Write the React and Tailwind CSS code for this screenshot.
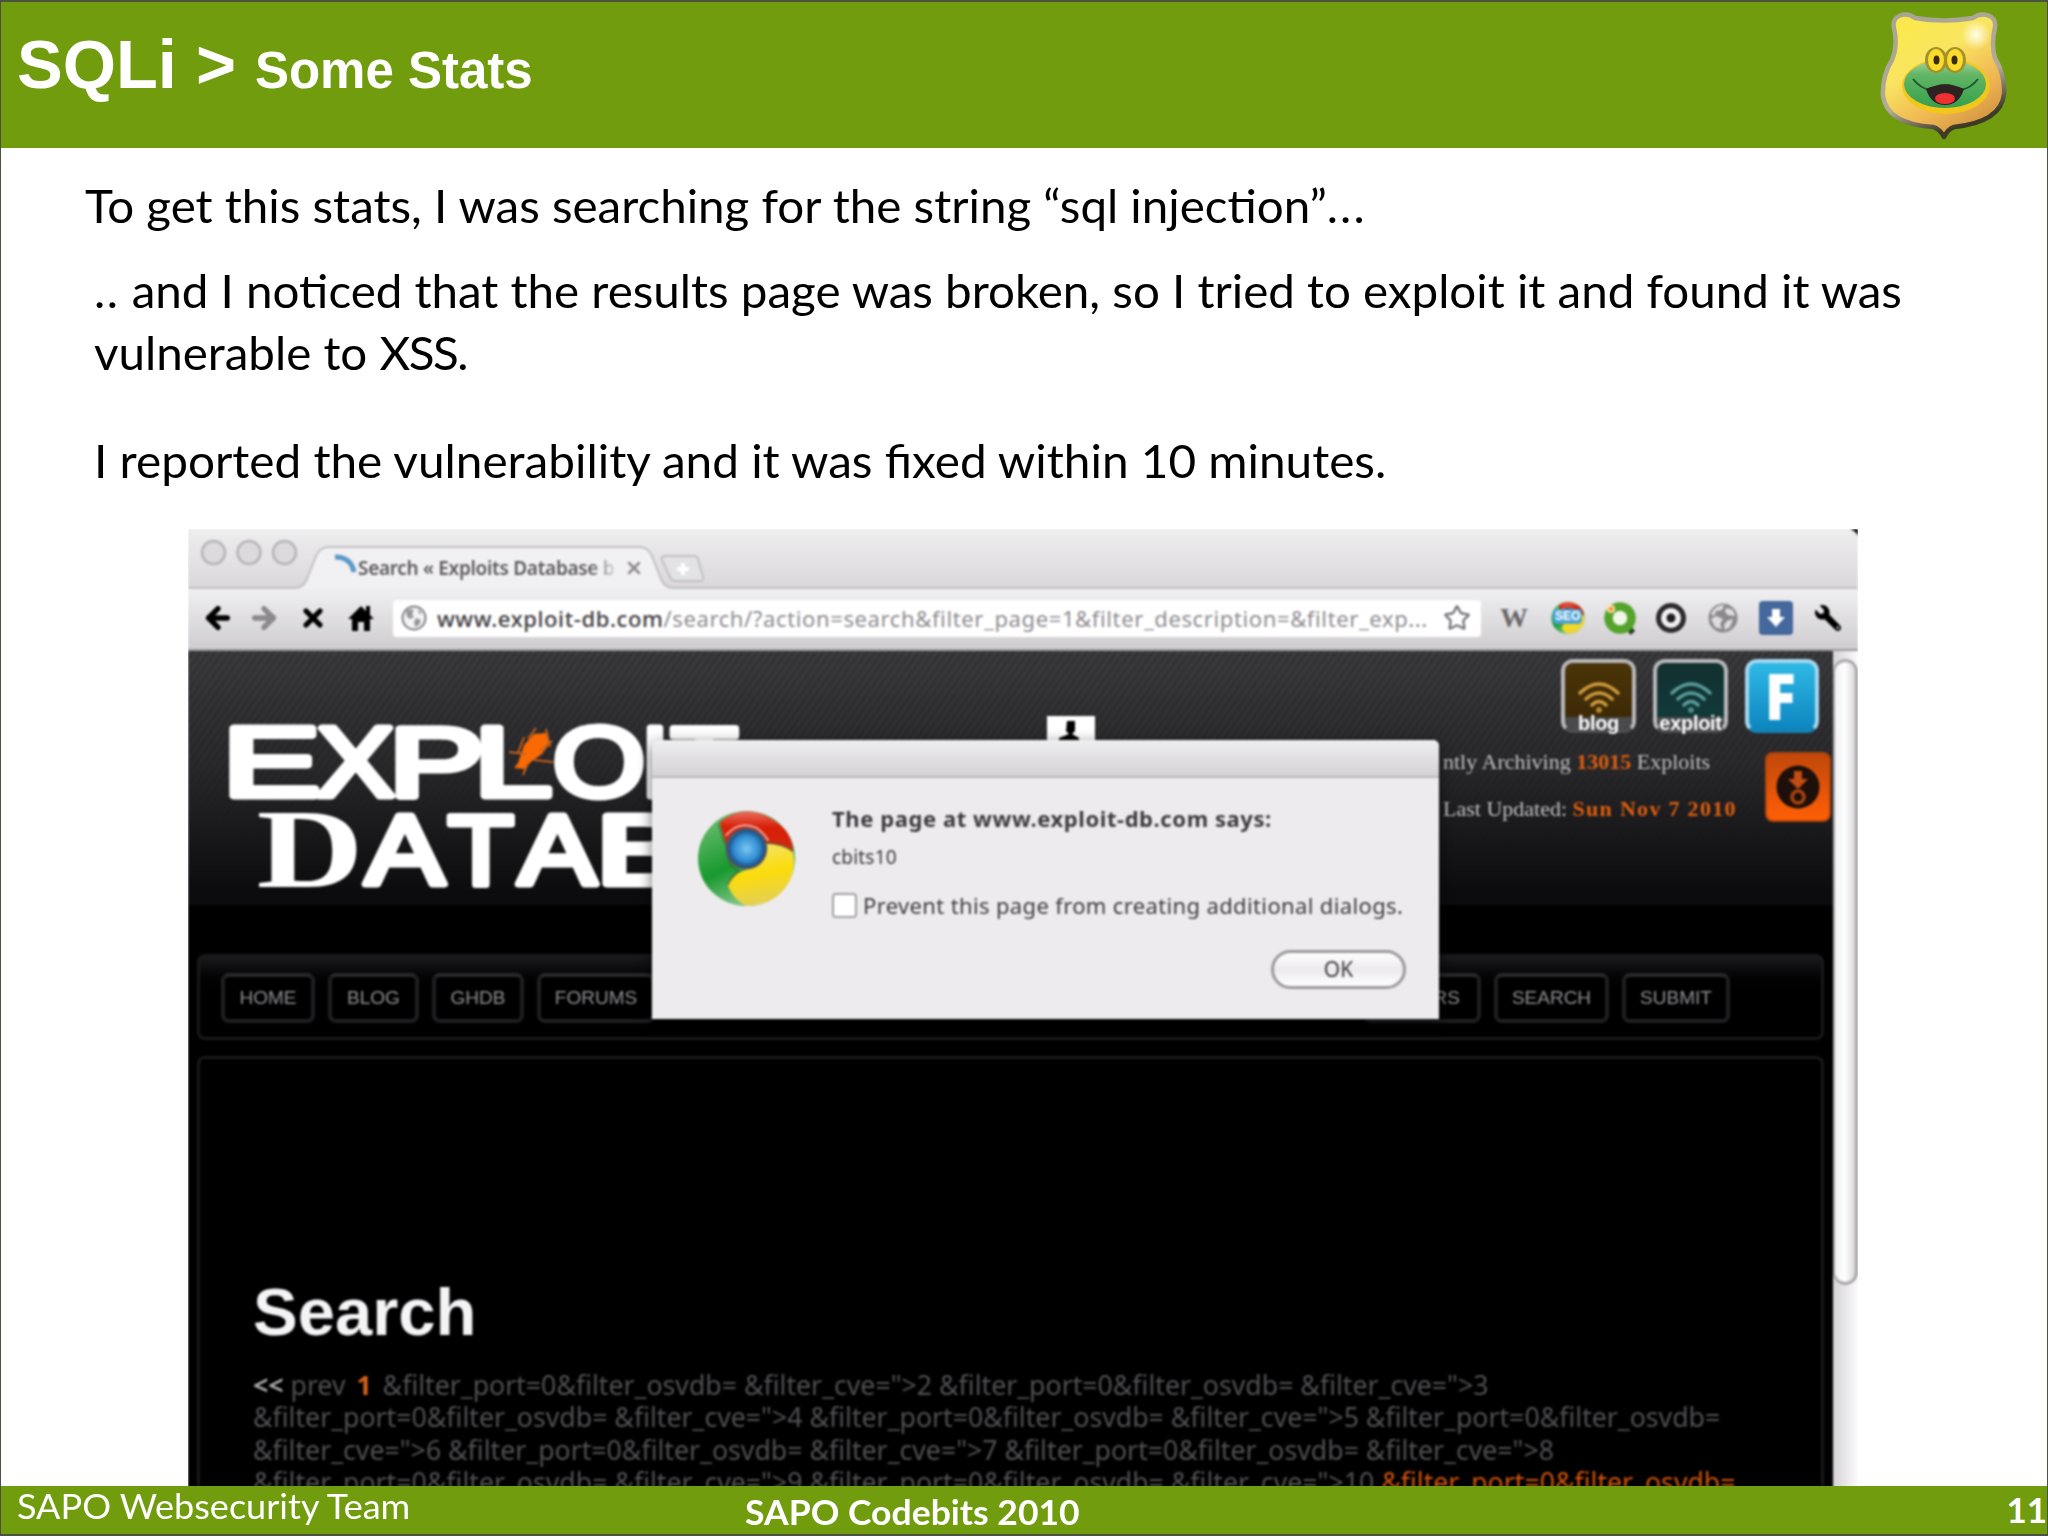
import React from 'react';
import { clsx } from 'clsx';
import { ArrowLeft, ArrowRight, Star, X } from 'lucide-react';
import { FaWrench } from 'react-icons/fa';

const Frog = () => (
    <svg viewBox="40 10 128 132" className="h-[132px] w-32 blur-[0.700px]">
        <defs>
            <linearGradient id="shield" x1="0.2" y1="0" x2="0.8" y2="1">
                <stop offset="0" stopColor="#fbe94a" />
                <stop offset="0.35" stopColor="#f9e560" />
                <stop offset="0.7" stopColor="#efb552" />
                <stop offset="1" stopColor="#c98b3e" />
            </linearGradient>
            <linearGradient id="rim" x1="0" y1="0" x2="0.4" y2="1">
                <stop offset="0" stopColor="#a9a493" />
                <stop offset="0.7" stopColor="#b3aa98" />
                <stop offset="1" stopColor="#3d3a26" />
            </linearGradient>
            <radialGradient id="glow">
                <stop offset="0" stopColor="#fffde8" />
                <stop offset="1" stopColor="#fffde8" stopOpacity="0" />
            </radialGradient>
            <linearGradient id="skin" x1="0" y1="0" x2="0" y2="1">
                <stop offset="0" stopColor="#a8d5a0" />
                <stop offset="0.3" stopColor="#63b665" />
                <stop offset="1" stopColor="#35a04c" />
            </linearGradient>
        </defs>
        <path
            d="M54 28C51 15 66 11 75 18Q104 23 133 18C142 11 157 15 155 27Q151 45 155 58C162 70 165 80 164 94C162 114 142 124 114 127Q108 129 104 137Q100 129 93 127C64 125 46 116 43 96Q42 76 52 60Q58 46 54 28Z"
            fill="url(#shield)"
            stroke="url(#rim)"
            strokeWidth="4.500"
            strokeLinejoin="round"
        />
        <circle cx="136" cy="35" r="15" fill="url(#glow)" />
        <ellipse cx="106" cy="86" rx="44" ry="28" fill="#f2c71c" />
        <ellipse cx="105" cy="84" rx="41" ry="24" fill="url(#skin)" />
        <ellipse cx="96" cy="60" rx="11" ry="13" fill="#a3922c" />
        <ellipse cx="115" cy="60" rx="11" ry="13" fill="#a3922c" />
        <ellipse cx="96" cy="60" rx="8" ry="11" fill="#fbdb2c" />
        <ellipse cx="115" cy="60" rx="8" ry="11" fill="#fbdb2c" />
        <ellipse cx="96.5" cy="60" rx="3" ry="4.5" fill="#3b2c08" />
        <ellipse cx="114.500" cy="60" rx="3" ry="4.500" fill="#3b2c08" />
        <path d="M73 79Q80 88 90 90Q105 80 121 90Q131 88 138 79" fill="none" stroke="#23572d" strokeWidth="2" />
        <path d="M86 89Q105 80 124 89Q119 105 105 105Q91 105 86 89Z" fill="#2c2222" />
        <ellipse cx="105" cy="98.500" rx="10" ry="5.500" fill="#ee3030" />
    </svg>
);

const Chrome = ({ className }) => (
    <svg viewBox="0 0 100 98" className={className}>
        <defs>
            <linearGradient id="green" x1="0" y1="0" x2="0.5" y2="1">
                <stop offset="0" stopColor="#7cc47d" />
                <stop offset="0.6" stopColor="#18992f" />
                <stop offset="1" stopColor="#8fcb93" />
            </linearGradient>
            <linearGradient id="red" x1="0" y1="0" x2="0" y2="1">
                <stop offset="0" stopColor="#e8705f" />
                <stop offset="0.4" stopColor="#d81e06" />
                <stop offset="1" stopColor="#d62a12" />
            </linearGradient>
            <linearGradient id="yellow" x1="0.3" y1="0" x2="0.5" y2="1">
                <stop offset="0" stopColor="#f6e36a" />
                <stop offset="0.5" stopColor="#fbdc0c" />
                <stop offset="1" stopColor="#e3cf5a" />
            </linearGradient>
            <radialGradient id="blue">
                <stop offset="0" stopColor="#79c6f3" />
                <stop offset="0.7" stopColor="#2f8bd0" />
                <stop offset="1" stopColor="#1b4f86" />
            </radialGradient>
        </defs>
        <ellipse cx="50" cy="49" rx="49" ry="48" fill="url(#green)" />
        <path d="M23 12Q48 -8 76 9Q97 22 97 42Q84 34 68 34Q60 18 44 20Q32 22 30 36Z" fill="url(#red)" />
        <path d="M68 34Q88 34 97 42Q102 70 80 88Q68 97 50 97Q36 90 31 76Q34 66 50 60Q66 56 68 34Z" fill="url(#yellow)" />
        <path d="M22 14Q26 28 30 38Q30 56 42 62Q34 68 31 76M68 33Q86 33 97 42" fill="none" stroke="#4b5a38" strokeWidth="2" opacity="0.6" />
        <path d="M29 26Q42 10 60 18Q68 24 72 31" fill="none" stroke="#f0a79b" strokeWidth="2" />
        <circle cx="50" cy="39" r="21" fill="#4d5668" />
        <circle cx="50" cy="39" r="18.500" fill="url(#blue)" />
    </svg>
);

const Globe = ({ className }) => (
    <svg viewBox="0 0 26 26" className={className}>
        <circle cx="13" cy="13" r="11.500" fill="#f4f4f4" stroke="#858387" strokeWidth="2" />
        <path d="M5 6Q10 3 13 5L11 9L13 12L9 14L6 12ZM15 13L20 15L18 20L14 22L13 17ZM17 4L21 8L18 9Z" fill="#98969a" />
    </svg>
);

const Extensions = () => (
    <div className="flex items-center text-black">
        <span className="ml-[19px] w-[30px] font-['Liberation_Serif',serif] text-[28px] font-bold leading-none text-[#6a686c]">W</span>
        <div className="relative ml-[21px] h-[34px] w-[34px]">
            <Chrome className="h-full w-full" />
            <span className="absolute left-0.5 top-2 rounded bg-[#4da3d6] px-0.5 font-['Liberation_Sans',sans-serif] text-[12px] font-bold leading-[15px] text-white">SEO</span>
        </div>
        <svg viewBox="0 0 36 36" className="ml-[17px] h-9 w-9">
            <path d="M24 25L31 33" stroke="#26401c" strokeWidth="6" />
            <circle cx="18" cy="18" r="11.500" fill="#f0f6e8" stroke="#55a32b" strokeWidth="8.500" />
            <circle cx="9" cy="9" r="4" fill="#ffe2a0" />
            <circle cx="9" cy="9" r="2" fill="#f27f32" />
        </svg>
        <svg viewBox="0 0 32 32" className="ml-[17px] h-8 w-8">
            <circle cx="16" cy="16" r="12.500" fill="#f1f0f2" stroke="#2b292c" strokeWidth="5" />
            <circle cx="16" cy="16" r="4.500" fill="#1f1d20" />
        </svg>
        <svg viewBox="0 0 32 32" className="ml-5 h-8 w-8">
            <circle cx="16" cy="16" r="14.500" fill="#8c8a8e" />
            <path d="M4 12Q8 3 17 3L15 8L9 9L7 14ZM19 6L26 8L28 14L21 13L18 10ZM4 17L9 14L16 17L13 22L15 27L8 25ZM20 19L26 17L23 25L18 28L17 23Z" fill="#dddcdf" />
        </svg>
        <svg viewBox="0 0 34 34" className="ml-5 h-[34px] w-[34px]">
            <rect width="34" height="34" rx="4" fill="#44679c" />
            <path d="M13 8H21V16H26L17 26L8 16H13Z" fill="#fff" />
        </svg>
        <FaWrench className="ml-[22px] h-[26px] w-[26px] -scale-x-100" />
    </div>
);

const TabStrip = () => (
    <div className="relative flex h-[60px] bg-linear-to-b from-[#efeeef] to-[#d9d7da]">
        <svg viewBox="0 0 1670 60" className="absolute inset-0 h-full w-full">
            <path d="M0 60V59H106Q115 59 119 50L128 27Q132 18 141 18H452Q460 18 464 27L473 50Q477 59 486 59H1670V60Z" fill="#f1f0f2" />
            <path d="M0 59H106Q115 59 119 50L128 27Q132 18 141 18H452Q460 18 464 27L473 50Q477 59 486 59H1670" fill="none" stroke="#c2c0c3" strokeWidth="2" />
            <path d="M476 27H506Q509 27 510 30L515 48Q516 52 512 52H488Q484 52 482 48L474 31Q473 27 476 27Z" fill="#e3e2e4" stroke="#c2c0c3" strokeWidth="2" />
            <path d="M495 34V46M489 40H501" stroke="#fff" strokeWidth="4" />
            <path d="M147 28Q163 28 166 43" fill="none" stroke="#5b9ac9" strokeWidth="5" />
            {[25.500, 61, 96.500].map((cx) => (
                <circle key={cx} cx={cx} cy="23.500" r="11.500" fill="#dcdadd" stroke="#b6b4b7" strokeWidth="2.500" />
            ))}
            <path d="M1662 0H1670V7Q1668 2 1662 0Z" fill="#000" />
        </svg>
        <div className="relative ml-[170px] mt-[23px] flex h-8 items-center font-['Noto_Sans',sans-serif] text-[19px] font-semibold tracking-[-0.300px] text-[#5c5a5e]">
            <span className="w-[262px] overflow-hidden whitespace-nowrap mask-r-from-88%">Search « Exploits Database b</span>
            <X className="ml-1 h-5 w-5 text-[#8c8a8e]" strokeWidth={3} />
        </div>
    </div>
);

const Toolbar = () => (
    <div className="flex h-[62px] items-center border-b-2 border-[#9b999c] bg-linear-to-b from-[#f0eff1] to-[#cfcdd0] pb-0.5 text-black">
        <ArrowLeft className="ml-[14px] h-8 w-8" strokeWidth={4} />
        <ArrowRight className="ml-[14px] h-8 w-8 text-[#8b898c]" strokeWidth={4} />
        <X className="ml-[19px] h-7 w-7" strokeWidth={4.500} />
        <svg viewBox="0 0 26 26" className="ml-[21px] h-[26px] w-[26px]">
            <path d="M13 1L0 14H4V26H10V17H16V26H22V14H26L22 10V1H18V6Z" fill="#000" />
        </svg>
        <div className="ml-[19px] flex h-[37px] w-[1088px] items-center rounded-sm bg-white">
            <Globe className="ml-2 h-[26px] w-[26px]" />
            <span className="ml-2.5 w-[994px] whitespace-nowrap font-['Noto_Sans',sans-serif] text-[22px] leading-[34px] tracking-[0.620px] text-[#8f8d91]">
                <span className="font-medium text-[#3f3d41]">www.exploit-db.com</span>
                /search/?action=search&amp;filter_page=1&amp;filter_description=&amp;filter_exp...
            </span>
            <Star className="ml-3 h-7 w-7 text-[#77757a]" strokeWidth={2} />
        </div>
        <Extensions />
    </div>
);

// [letter, x, width] of every glyph in the two logo rows
const exploit = [
    ['E', -5.500, 98],
    ['X', 89, 77],
    ['P', 160.800, 95.300],
    ['L', 246, 78.200],
    ['O', 324.800, 92.400],
    ['I', 413, 28],
    ['T', 443, 66.800],
];
const database = [
    ['A', 137.500, 78.600],
    ['T', 220, 65.700],
    ['A', 290.500, 77.600],
    ['B', 367.500, 98],
];

const Logo = () => (
    <svg viewBox="0 0 530 180" className="h-[180px] w-[530px] overflow-visible fill-white font-['Liberation_Sans',sans-serif] text-[99px]">
        <g stroke="#fff" strokeWidth="7" strokeLinejoin="round">
            {exploit.map(([letter, x, width]) => (
                <text key={x} x={x} y="83" textLength={width} lengthAdjust="spacingAndGlyphs">{letter}</text>
            ))}
            {database.map(([letter, x, width]) => (
                <text key={x} x={x} y="170.500" textLength={width} lengthAdjust="spacingAndGlyphs">{letter}</text>
            ))}
        </g>
        <text x="28.500" y="174" textLength="107" lengthAdjust="spacingAndGlyphs" className="font-['Liberation_Serif',serif] text-[113px] font-bold">D</text>
        <path d="M290 50L296 32L306 21L318 20L322 30L314 41L304 48L296 56L286 55Z" fill="#f96a05" />
        <path d="M281 39L298 41M306 47L325 49M295 62L300 50M300 26L308 15M290 40L296 24M324 28L312 38M318 16L322 34" stroke="#c8611a" strokeWidth="2" />
    </svg>
);

const Wifi = ({ stroke }) => (
    <svg viewBox="0 0 44 32" className="h-8 w-11" fill="none" stroke={stroke} strokeWidth="3.500" strokeLinecap="round">
        <path d="M3 12Q22 -6 41 12M9 18Q22 6 35 18M15 24Q22 17 29 24" />
        <circle cx="22" cy="29" r="1" />
    </svg>
);

const Badge = ({ label, fill, stroke }) => (
    <div className={clsx('relative flex h-[74px] w-[75px] justify-center rounded-xl border-4 border-[#b9b8ba] border-b-[#4e4d50] pt-[18px]', fill)}>
        <Wifi stroke={stroke} />
        <div className="absolute inset-x-0 bottom-0 h-3 rounded-b-lg bg-[#4a494c]" />
        <span className="absolute -bottom-[6px] font-['Liberation_Sans',sans-serif] text-[20px] font-bold leading-6 tracking-[-0.300px] text-white">{label}</span>
    </div>
);

const Masthead = () => (
    <div className="relative h-[254px] bg-linear-to-b from-[#3b3a3d] via-[#29282b] via-45% to-[#0c0b0e] to-95%">
        <div className="absolute inset-0 bg-[repeating-linear-gradient(125deg,transparent_0_4px,rgba(0,0,0,0.14)_4px_6px)] mask-b-from-30% mask-b-to-80%" />
        <div className="absolute left-10 top-[62px]">
            <Logo />
        </div>
        <svg viewBox="0 0 48 48" className="absolute left-[859px] top-[65px] h-12 w-12">
            <rect width="48" height="48" fill="#fff" />
            <path d="M20 5H28V15L25 18L32 22V30H12V22L22 18L19 15Z" fill="#000" />
        </svg>
        <div className="absolute right-[14px] top-2 flex gap-[17px]">
            <Badge label="blog" fill="bg-linear-to-b from-[#4a3408] to-[#3a2806]" stroke="#d09a3c" />
            <Badge label="exploit" fill="bg-linear-to-b from-[#12302f] to-[#123b3c]" stroke="#5b9c9c" />
            <div className="flex h-[74px] w-[74px] items-center justify-center rounded-xl border-4 border-[#a5d8ee] border-b-[#1583b4] bg-linear-to-b from-[#2fb9e6] to-[#0c86c0] font-['Open_Sans',sans-serif] text-[64px] font-extrabold leading-none text-white">
                <span className="-ml-1 scale-x-90">F</span>
            </div>
        </div>
        <div className="absolute left-[1255px] top-[87px] whitespace-nowrap font-['Liberation_Serif',serif] text-[22px] leading-[47px] text-[#c2c1c4]">
            <p>ntly Archiving <b className="text-[#e0600f]">13015</b> Exploits</p>
            <p>Last Updated: <b className="tracking-[1.300px] text-[#e0600f]">Sun Nov 7 2010</b></p>
        </div>
        <div className="absolute right-0.5 top-[101px] flex h-[70px] w-[66px] items-center justify-center rounded-lg border-2 border-[#b0440a] bg-linear-to-b from-[#c2480a] to-[#ff5f06]">
            <svg viewBox="0 0 44 44" className="h-11 w-11">
                <circle cx="22" cy="22" r="21.500" fill="#1d0f0a" />
                <path d="M18 6H26V14H32L22 24L12 14H18Z" fill="#c24c12" />
                <circle cx="22" cy="32" r="6" fill="none" stroke="#a8430f" strokeWidth="3.500" />
            </svg>
        </div>
    </div>
);

const nav = [
    ['HOME', 'w-[94px]'],
    ['BLOG', 'w-[91px]'],
    ['GHDB', 'w-[92px]'],
    ['FORUMS', 'w-[118px]'],
];

const NavButton = ({ label, width }) => (
    <div className={clsx('flex h-[50px] shrink-0 items-center justify-center rounded-lg border-4 border-[#1f1e21] border-t-[#29282b] bg-black', width)}>{label}</div>
);

const Nav = () => (
    <div className="mx-[9px] mt-[49px] flex h-[86px] items-center gap-[13px] rounded-lg border-3 border-[#19181b] bg-linear-to-b from-[#1a191c] to-black to-50% px-[21px] pt-0.5 font-['Liberation_Sans',sans-serif] text-[19px] text-[#8e8c90]">
        {nav.map(([label, width]) => <NavButton key={label} label={label} width={width} />)}
        <div className="ml-auto mr-[70px] flex gap-[13px]">
            <NavButton label="PAPERS" width="w-[118px]" />
            <NavButton label="SEARCH" width="w-[115px]" />
            <NavButton label="SUBMIT" width="w-[108px]" />
        </div>
    </div>
);

const Results = () => (
    <div className="mx-[9px] mt-4 h-[430px] rounded-t-lg border-3 border-b-0 border-[#19181b] pl-[53px] pt-[213px]">
        <h2 className="font-['Liberation_Sans',sans-serif] text-[67px] font-bold leading-[80px] text-[#f4f3f5]">Search</h2>
        <div className="mt-[17px] whitespace-nowrap font-['Noto_Sans',sans-serif] text-[26.700px] leading-[32.300px] text-[#504f52]">
            <p>
                <b className="text-[#aaa]">&lt;&lt;</b> prev <b className="mx-1 text-[#d9631c]">1</b> &amp;filter_port=0&amp;filter_osvdb= &amp;filter_cve="&gt;2 &amp;filter_port=0&amp;filter_osvdb= &amp;filter_cve="&gt;3
            </p>
            <p>&amp;filter_port=0&amp;filter_osvdb= &amp;filter_cve="&gt;4 &amp;filter_port=0&amp;filter_osvdb= &amp;filter_cve="&gt;5 &amp;filter_port=0&amp;filter_osvdb=</p>
            <p>&amp;filter_cve="&gt;6 &amp;filter_port=0&amp;filter_osvdb= &amp;filter_cve="&gt;7 &amp;filter_port=0&amp;filter_osvdb= &amp;filter_cve="&gt;8</p>
            <p>
                &amp;filter_port=0&amp;filter_osvdb= &amp;filter_cve="&gt;9 &amp;filter_port=0&amp;filter_osvdb= &amp;filter_cve="&gt;10 <span className="text-[#d0540c]">&amp;filter_port=0&amp;filter_osvdb=</span>
            </p>
        </div>
    </div>
);

const Alert = () => (
    <div className="absolute left-[464px] top-[211px] h-[279px] w-[787px] rounded-t-md bg-[#edebee] font-['Noto_Sans',sans-serif] text-[#3d3b3f] shadow-[0_4px_14px_rgba(0,0,0,0.6)]">
        <div className="h-[38px] rounded-t-md border-b-2 border-[#b9b7ba] bg-linear-to-b from-[#efeef0] to-[#d4d2d5]" />
        <div className="flex pl-[45px] pt-[32px]">
            <Chrome className="h-[97px] w-[99px]" />
            <div className="-mt-[7px] ml-9 whitespace-nowrap">
                <p className="text-[22px] font-bold leading-[30px] tracking-[0.580px]">The page at www.exploit-db.com says:</p>
                <p className="mt-[9px] text-[19px] leading-[30px] tracking-[0.200px]">cbits10</p>
                <div className="mt-[18px] flex items-center">
                    <div className="h-[25px] w-[25px] rounded border-2 border-[#a3a1a4] bg-white" />
                    <span className="ml-1.5 text-[22px] leading-[30px] tracking-[0.360px]">Prevent this page from creating additional dialogs.</span>
                </div>
            </div>
        </div>
        <div className="absolute bottom-[30px] right-[33px] flex h-[39px] w-[135px] items-center justify-center rounded-full border-3 border-[#9b999c] bg-linear-to-b from-white via-[#eceaed] to-white text-[21px]">
            OK
        </div>
    </div>
);

const Scrollbar = () => (
    <div className="w-[25px] bg-linear-to-r from-[#d5d3d6] to-[#fbfafc] pt-2">
        <div className="h-[626px] rounded-full border-3 border-l-2 border-[#a9a7aa] bg-linear-to-r from-[#f2f1f3] via-white to-[#d8d6d9]" />
    </div>
);

const Browser = () => (
    <div className="ml-[187px] h-[957px] w-[1670px] overflow-hidden">
        <div className="relative blur-[0.900px]">
            <TabStrip />
            <Toolbar />
            <div className="flex h-[840px]">
                <div className="w-[1645px] bg-black">
                    <Masthead />
                    <Nav />
                    <Results />
                </div>
                <Scrollbar />
            </div>
            <Alert />
        </div>
    </div>
);

export default () => (
    <div className="flex h-[1536px] w-[2048px] flex-col overflow-hidden border border-t-2 border-b-2 border-[#4c5240] bg-white font-['Lato',sans-serif]">
        <header className="flex h-[146px] shrink-0 justify-between bg-[#709c0e] pl-4 pr-[39px] text-white">
            <h1 className="mt-[23px] font-['Liberation_Sans',sans-serif] text-[68.500px] font-bold leading-[80px]">
                SQLi &gt; <span className="text-[51px]">Some Stats</span>
            </h1>
            <div className="mt-2">
                <Frog />
            </div>
        </header>
        <main className="h-[1338px] shrink-0 overflow-hidden">
            <div className="pl-[93px] pt-[27px] text-[46px] leading-[62px] whitespace-nowrap text-black">
                <p className="-ml-[9px] origin-left scale-x-[1.033]">
                    To get this stats, I was searching for the string “sql injection”<span className="tracking-[2px]">...</span>
                </p>
                <p className="mt-[23px] origin-left scale-x-[1.033]">
                    <span className="tracking-[1.500px]">..</span> and I noticed that the results page was broken, so I tried to exploit it and found it was
                    <br />
                    vulnerable to <span className="tracking-[-1.500px]">XSS.</span>
                </p>
                <p className="mt-[46px] origin-left scale-x-[1.037]">I reported the vulnerability and it was fixed within 10 minutes.</p>
            </div>
            <div className="mt-[37px]">
                <Browser />
            </div>
        </main>
        <footer className="flex h-12 shrink-0 bg-[#709c0e] pl-4 text-[35px] leading-[38px] text-white">
            <span className="w-[728px] origin-left scale-x-[1.030]">SAPO Websecurity Team</span>
            <b className="origin-left scale-x-[1.015] pt-1.5">SAPO Codebits 2010</b>
            <b className="ml-auto pt-1">11</b>
        </footer>
    </div>
);
